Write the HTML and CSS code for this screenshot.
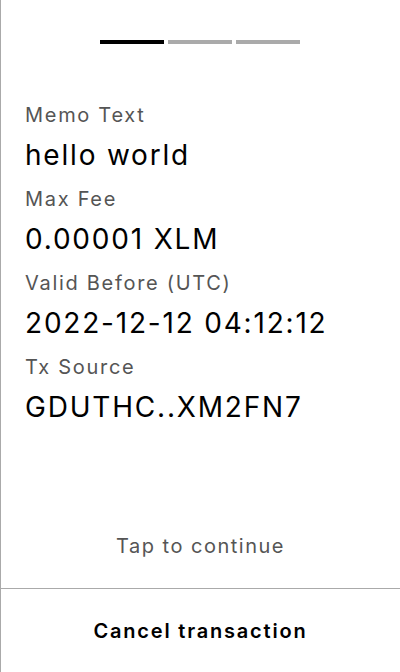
FILE: index.html
```html
<!DOCTYPE html>
<html>
<head>
<meta charset="utf-8">
<link rel="stylesheet" href="styles.css">
</head>
<body>
<div class="screen">
  <div class="progress">
    <span class="step active"></span>
    <span class="step"></span>
    <span class="step"></span>
  </div>
  <div class="details">
    <div class="item">
      <div class="label">Memo Text</div>
      <div class="value">hello world</div>
    </div>
    <div class="item">
      <div class="label">Max Fee</div>
      <div class="value">0.00001 XLM</div>
    </div>
    <div class="item">
      <div class="label">Valid Before (UTC)</div>
      <div class="value">2022-12-12 04:12:12</div>
    </div>
    <div class="item">
      <div class="label">Tx Source</div>
      <div class="value">GDUTHC..XM2FN7</div>
    </div>
  </div>
  <div class="tap">Tap to continue</div>
  <div class="footer">
    <button class="cancel">Cancel transaction</button>
  </div>
</div>
</body>
</html>
```
FILE: styles.css
```css
html, body {
  margin: 0;
  padding: 0;
  background: #fff;
}
body {
  font-family: Inter, "Noto Sans", sans-serif;
  color: #000;
}
.screen {
  box-sizing: border-box;
  width: 400px;
  height: 672px;
  border-left: 1px solid #aaa;
  display: flex;
  flex-direction: column;
}
.progress {
  display: flex;
  justify-content: center;
  gap: 4px;
  padding-top: 40px;
  padding-right: 1px;
}
.step {
  display: block;
  width: 64px;
  height: 4px;
  background: #aaa;
}
.step.active {
  background: #000;
}
.details {
  padding: 57px 24px 0;
  display: flex;
  flex-direction: column;
  gap: 10px;
}
.label {
  font-size: 20px;
  line-height: 28px;
  color: #555;
  margin-bottom: 6px;
  letter-spacing: 1.7px;
}
.value {
  font-size: 28px;
  line-height: 40px;
  color: #000;
  letter-spacing: 1.8px;
}
.tap {
  margin-top: auto;
  text-align: center;
  font-size: 20px;
  line-height: 28px;
  color: #555;
  padding-bottom: 28px;
  letter-spacing: 1.5px;
}
.footer {
  border-top: 1px solid #aaa;
  height: 83px;
  display: flex;
}
.cancel {
  flex: 1;
  border: 0;
  background: transparent;
  font-family: Inter, "Noto Sans", sans-serif;
  font-size: 20px;
  font-weight: 600;
  color: #000;
  padding: 0;
  letter-spacing: 1.8px;
}
```
